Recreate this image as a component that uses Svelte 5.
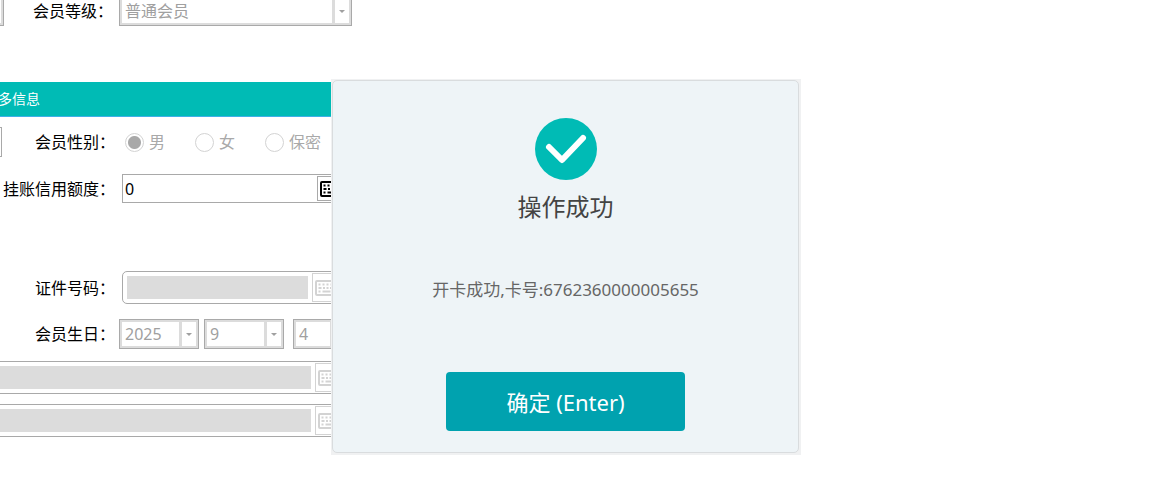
<script lang="ts">
  let level = $state('普通会员');
  let gender = $state('男');
  let credit = $state('0');
  let open = $state(true);

  const genders = ['男', '女', '保密'];
  const birthday = [
    { label: '年', value: '2025' },
    { label: '月', value: '9' },
    { label: '日', value: '4' }
  ];
  const longFields = ['地址', '备注'];
</script>

{#snippet keyboard()}
  <svg class="keyboard" viewBox="0 0 22 16" width="22" height="16" aria-hidden="true">
    <rect x="1" y="1" width="20" height="14" rx="1" fill="none" stroke="currentColor" stroke-width="2" />
    <path
      d="M3.500 4.500h2M7.500 4.500h2M11.500 4.500h2M15.500 4.500h2M3.500 8h3M8 8h2M11.500 8h2M15 8h3M3.500 11.500h2M7.500 11.500h8M16.500 11.500h2"
      stroke="currentColor"
      stroke-width="1.800"
    />
  </svg>
{/snippet}

{#snippet arrow()}
  <span class="arrow" aria-hidden="true">
    <svg viewBox="0 0 6 3" width="6" height="3"><path d="M0 0h6L3 3z" fill="currentColor" /></svg>
  </span>
{/snippet}

<main>
  <form>
    <div class="row top">
      <input class="edge double" disabled aria-label="上一项" />
      <label for="level">会员等级：</label>
      <div class="combo level">
        <select id="level" bind:value={level} disabled>
          <option>普通会员</option>
        </select>
        {@render arrow()}
      </div>
    </div>

    <h2>多信息</h2>

    <div class="row gender">
      <input class="edge" disabled aria-label="上一项" />
      <span class="label" id="gender">会员性别：</span>
      <div class="radios" role="radiogroup" aria-labelledby="gender">
        {#each genders as g}
          <label class="radio">
            <input type="radio" name="gender" value={g} bind:group={gender} disabled />
            {g}
          </label>
        {/each}
      </div>
    </div>

    <div class="row credit">
      <label for="credit">挂账信用额度：</label>
      <div class="field">
        <input id="credit" type="text" bind:value={credit} />
        <button type="button" aria-label="键盘">{@render keyboard()}</button>
      </div>
    </div>

    <div class="row cert">
      <label for="cert">证件号码：</label>
      <div class="field off">
        <input id="cert" type="text" disabled />
        <button type="button" disabled aria-label="键盘">{@render keyboard()}</button>
      </div>
    </div>

    <div class="row birth">
      <span class="label" id="birth">会员生日：</span>
      <div class="dates" role="group" aria-labelledby="birth">
        {#each birthday as part}
          <div class="combo">
            <select disabled aria-label={part.label}>
              <option>{part.value}</option>
            </select>
            {@render arrow()}
          </div>
        {/each}
      </div>
    </div>

    <div class="long">
      {#each longFields as name}
        <div class="field off wide">
          <input type="text" disabled aria-label={name} />
          <button type="button" disabled aria-label="键盘">{@render keyboard()}</button>
        </div>
      {/each}
    </div>
  </form>

  {#if open}
    <div class="dialog" role="dialog" aria-labelledby="dialog-title">
      <div class="panel">
        <svg class="check" viewBox="0 0 62 62" width="62" height="62" aria-hidden="true">
          <circle cx="31" cy="31" r="31" fill="#00bbb5" />
          <path
            d="M14 29l13 13L48 20"
            fill="none"
            stroke="#fff"
            stroke-width="6"
            stroke-linecap="round"
            stroke-linejoin="round"
          />
        </svg>
        <h1 id="dialog-title">操作成功</h1>
        <p>开卡成功,卡号:6762360000005655</p>
        <button class="confirm" type="button" onclick={() => (open = false)}>确定 (Enter)</button>
      </div>
    </div>
  {/if}
</main>

<style>
  :global(body) {
    background: #fff;
  }

  main {
    position: relative;
    overflow: hidden;
    padding-bottom: 18px;
    font-family: 'Noto Sans', 'Noto Sans CJK SC', sans-serif;
    font-size: 16px;
    line-height: 24px;
    color: #000;
  }

  form {
    width: 60%;
    margin-top: -4px;
  }

  input,
  select,
  button {
    box-sizing: border-box;
    margin: 0;
    padding: 0;
    border: 0;
    border-radius: 0;
    font: inherit;
    color: inherit;
    appearance: none;
  }

  .row {
    display: grid;
    grid-template-columns: 115px 1fr;
    column-gap: 4px;
    align-items: center;
  }

  .row > label,
  .label {
    grid-area: 1 / 1;
    justify-self: end;
    white-space: nowrap;
  }

  .top {
    grid-template-columns: 113px 1fr;
    column-gap: 6px;
  }

  .edge {
    grid-area: 1 / 1;
    width: 2px;
    height: 30px;
    background: #fff;
    border: solid #a9a9a9;
    border-width: 1px 1px 1px 0;
  }

  .double {
    width: 4px;
    box-shadow: inset -2px -2px #dcdcdc;
  }

  .combo {
    display: flex;
    box-sizing: border-box;
    width: 80px;
    height: 30px;
    padding: 2px;
    background: #dcdcdc;
    border: 1px solid #a9a9a9;
    color: #a0a0a0;
  }

  .combo select {
    flex: 1;
    min-width: 0;
    padding: 0 3px;
    background: #fff;
    opacity: 1;
  }

  .level {
    width: 233px;
  }

  .arrow {
    display: flex;
    align-items: center;
    justify-content: center;
    width: 14px;
    margin-left: 3px;
    background: #fff;
  }

  h2 {
    height: 34px;
    margin: 56px 0 0;
    background: #00bbb5;
    border-bottom: 1px solid #3fb0e8;
    font-size: 14px;
    font-weight: 400;
    line-height: 34px;
    color: #fff;
    text-indent: -2px;
  }

  .gender {
    margin-top: 10px;
  }

  .radios {
    display: grid;
    grid-template-columns: repeat(3, 70px);
    padding-left: 6px;
  }

  .radio {
    display: flex;
    align-items: center;
    gap: 5px;
    white-space: nowrap;
    color: #a9a9a9;
  }

  .radio input {
    width: 19px;
    height: 19px;
    border: 1px solid #d3d3d3;
    border-radius: 50%;
  }

  .radio input:checked {
    background: radial-gradient(circle, #a9a9a9 6px, #fff 7px);
  }

  .credit {
    margin-top: 17px;
  }

  .field {
    display: flex;
    align-items: center;
    box-sizing: border-box;
    width: 223px;
    height: 29px;
    margin-left: 3px;
    padding: 0 1px 0 2px;
    background: #fff;
    border: 1px solid #a9a9a9;
  }

  .field input {
    flex: 1;
    min-width: 0;
    height: 25px;
  }

  .field button {
    display: flex;
    align-items: center;
    width: 26px;
    height: 25px;
    padding-left: 2px;
    background: #fff;
    border: 1px solid #a9a9a9;
  }

  .keyboard {
    flex: none;
    color: #000;
  }

  .off {
    height: 33px;
    padding-left: 4px;
    border-radius: 5px;
  }

  .off input {
    height: 23px;
    margin-right: 4px;
    background: #dcdcdc;
  }

  .off button {
    width: 31px;
    height: 29px;
    border-color: #d3d3d3;
  }

  .off .keyboard {
    color: #d3d3d3;
  }

  .cert {
    margin-top: 68px;
  }

  .birth {
    margin-top: 15px;
  }

  .dates {
    display: grid;
    grid-template-columns: 85px 89px 57px;
  }

  .dates .combo:last-child {
    width: 57px;
  }

  .long {
    display: grid;
    gap: 10px;
    margin-top: 12px;
  }

  .wide {
    width: 348px;
    margin-left: 0;
    padding-left: 0;
    border-left: 0;
    border-radius: 0;
  }

  .dialog {
    position: absolute;
    top: 79px;
    left: 331px;
    box-sizing: border-box;
    width: 470px;
    padding: 1px 2px 2px 1px;
    background: #f0f1f2;
  }

  .panel {
    display: flex;
    flex-direction: column;
    align-items: center;
    padding: 37px 0 21px;
    background: #eef4f7;
    border: 1px solid #d9dcde;
    border-radius: 5px;
  }

  .check {
    display: block;
  }

  h1 {
    margin: 9px 0 0;
    font-size: 24px;
    font-weight: 400;
    line-height: 36px;
    color: #444;
  }

  p {
    margin: 52px 0 0;
    font-size: 17px;
    line-height: 26px;
    color: #666;
  }

  .confirm {
    width: 239px;
    height: 59px;
    margin-top: 69px;
    background: #00a2af;
    border-radius: 4px;
    font-size: 22px;
    color: #fff;
    cursor: pointer;
  }
</style>
